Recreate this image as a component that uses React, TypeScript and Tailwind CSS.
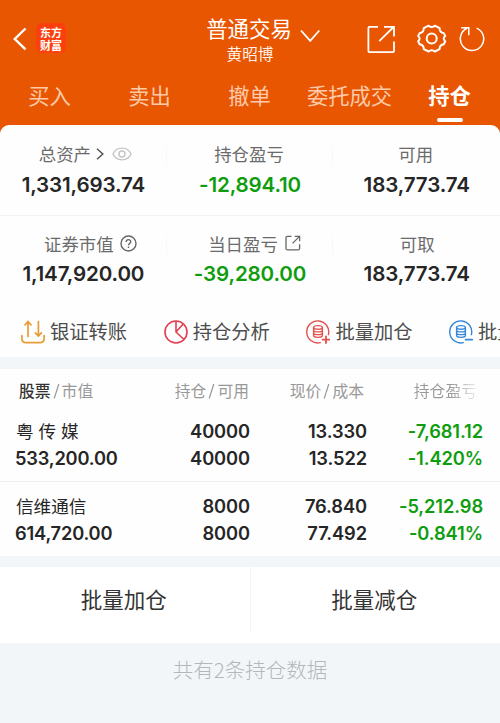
import type { ReactNode } from 'react';

const tabs = ['买入', '卖出', '撤单', '委托成交', '持仓'];

const holdings = [
    { name: '粤 传 媒', value: '533,200.00', amount: '40000', available: '40000', price: '13.330', cost: '13.522', profit: '-7,681.12', rate: '-1.420%' },
    { name: '信维通信', value: '614,720.00', amount: '8000', available: '8000', price: '76.840', cost: '77.492', profit: '-5,212.98', rate: '-0.841%' },
];

function CoinIcon({ color, minus }: { color: string; minus?: boolean }) {
    return (
        <svg className="h-6 w-6 shrink-0" viewBox="0 0 24 24" fill="none" stroke={color} strokeWidth="1.4" strokeLinecap="round">
            <path d="M14.3 22.6 A11 11 0 1 1 22.4 14.6" />
            <ellipse cx="12" cy="7.4" rx="4.4" ry="1.8" />
            <path d="M7.6 7.4 V15.6 C7.6 18 16.4 18 16.4 15.6 V7.4 M7.6 10.2 C7.6 12.4 16.4 12.4 16.4 10.2 M7.6 13 C7.6 15.2 16.4 15.2 16.4 13" />
            <path d={minus ? 'M16.6 19.7 H23.2' : 'M16.6 19.7 H23.4 M20 16.3 V23.1'} strokeWidth="1.8" />
        </svg>
    );
}

function Header() {
    return (
        <header className="h-[134px] bg-[#e85602] text-white">
            <div className="flex h-[75px] items-start">
                <div className="flex w-[150px] items-center pl-3 pt-[23px]">
                    <svg className="h-[30px] w-4" viewBox="0 0 16 30" fill="none" stroke="#fff" strokeWidth="2.4">
                        <path d="M13.5 5.5 L2.8 16 L13.5 26.3" />
                    </svg>
                    <div className="ml-2 flex h-[30px] w-[30px] items-center justify-center rounded-md bg-[#fc3f0c] pt-px text-[11px] font-bold leading-[12.5px]">
                        东方<br />财富
                    </div>
                </div>
                <div className="w-[200px] pt-[13px] text-center">
                    <div className="relative right-px text-[21.4px] leading-[30px]">
                        普通交易
                        <svg className="absolute left-[151px] top-[15px] h-4 w-5" viewBox="0 0 20 16" fill="none" stroke="#fff" strokeWidth="1.8">
                            <path d="M1 2.5 L10.2 12.8 L19.3 2.5" />
                        </svg>
                    </div>
                    <div className="text-[15.6px] leading-5 text-[#fff0e6]">黄昭博</div>
                </div>
                <div className="flex w-[150px] items-center pl-[16px] pt-[23px]">
                    <svg className="h-[30px] w-[30px]" viewBox="0 0 30 30" fill="none" stroke="#fff" strokeWidth="1.8">
                        <path d="M12 3.8 H3.5 Q2.4 3.8 2.4 4.9 V28 Q2.4 29.1 3.5 29.1 H26.9 Q28 29.1 28 28 V18.5 M13.2 18.2 L27.6 4 M18 3.8 H28 V13.5" />
                    </svg>
                    <svg className="ml-[21px] h-[30px] w-[30px]" viewBox="0 0 30 30" fill="none" stroke="#fff" strokeWidth="2" strokeLinejoin="round">
                        <path d="M11.6 2.7 Q14.7 5.2 17.8 2.7 L22.6 5.1 Q22.5 9.4 26.8 10.2 L28.2 12.9 Q25.3 15.6 28.2 18.3 L26.8 21.2 Q22.5 21.8 22.6 26.1 L17.8 28.5 Q14.7 26 11.6 28.5 L6.8 26.1 Q6.9 21.8 2.6 21.2 L1.2 18.3 Q4.1 15.6 1.2 12.9 L2.6 10.2 Q6.9 9.4 6.8 5.1 Z" />
                        <circle cx="14.7" cy="15.6" r="5" />
                    </svg>
                    <svg className="ml-3 h-[30px] w-[27px]" viewBox="0 0 27 30" fill="none" stroke="#fff" strokeWidth="1.5">
                        <path d="M17.6 5.1 A11.7 11.7 0 1 1 8 5.3 M2.2 4.8 H9.8 V12.3" />
                    </svg>
                </div>
            </div>
            <nav className="grid grid-cols-5 text-center text-[21.3px] leading-10">
                {tabs.map(tab => (
                    <div key={tab} className={tab === '持仓' ? 'relative right-[0.5px] font-bold' : 'relative right-[0.5px] text-[#fdc9a8]'}>
                        {tab}
                        {tab === '持仓' && <span className="absolute left-[37px] top-[42.5px] h-1 w-[26px] rounded-sm bg-white" />}
                    </div>
                ))}
            </nav>
        </header>
    );
}

function Stat({ label, value, green, divider }: { label: ReactNode; value: string; green?: boolean; divider?: boolean }) {
    return (
        <div className="relative flex flex-col items-center">
            <div className="relative right-px flex h-6 items-center text-[17.4px] leading-[23px] text-[#6b6b6b]">{label}</div>
            <div className={`mt-[5px] font-['Inter'] text-[20.6px] font-semibold leading-7 tracking-[-0.15px] ${green ? 'text-[#0f9d0f]' : 'text-[#262626]'}`}>{value}</div>
            {divider && <span className="absolute right-0 top-1 h-5 w-px bg-[#f8f8f8]" />}
        </div>
    );
}

function Summary() {
    return (
        <section className="-mt-[9px] rounded-t-[9px] bg-[#fefefe]">
            <div className="grid h-[91px] grid-cols-3 border-b border-[#f3f3f3] pt-[16.5px]">
                <Stat
                    divider
                    value="1,331,693.74"
                    label={
                        <div className="flex items-center pl-[6px]">
                            总资产
                            <svg className="ml-[5px] h-3 w-2" viewBox="0 0 8 12" fill="none" stroke="#555" strokeWidth="1.5">
                                <path d="M1 0.8 L6.8 6 L1 11.2" />
                            </svg>
                            <svg className="ml-2 h-[14px] w-5" viewBox="0 0 20 14" fill="none" stroke="#c4c4c4" strokeWidth="1.4">
                                <path d="M1 7 C4.5 -0.8 15.5 -0.8 19 7 C15.5 14.8 4.5 14.8 1 7 Z" />
                                <circle cx="10" cy="7" r="3" />
                            </svg>
                        </div>
                    }
                />
                <Stat divider green label="持仓盈亏" value="-12,894.10" />
                <Stat label="可用" value="183,773.74" />
            </div>
            <div className="grid h-[88px] grid-cols-3 pt-[15px]">
                <Stat
                    divider
                    value="1,147,920.00"
                    label={
                        <div className="flex items-center pl-4">
                            证券市值
                            <svg className="ml-[6px] h-[17px] w-[17px]" viewBox="0 0 17 17" fill="none" stroke="#666" strokeWidth="1.4">
                                <circle cx="8.5" cy="8.5" r="7.5" />
                                <path d="M6.2 7 C6.2 3.8 10.9 4 10.8 6.8 C10.7 8.5 8.5 8.3 8.5 10.3 M8.5 11.5 V13" />
                            </svg>
                        </div>
                    }
                />
                <Stat
                    divider
                    green
                    value="-39,280.00"
                    label={
                        <div className="flex items-center pl-[11px]">
                            当日盈亏
                            <svg className="ml-[7px] h-4 w-4" viewBox="0 0 16 16" fill="none" stroke="#666" strokeWidth="1.3">
                                <path d="M6.5 1.3 H2.5 Q1 1.3 1 2.8 V13.4 Q1 14.9 2.5 14.9 H13.1 Q14.6 14.9 14.6 13.4 V9.3 M7.6 8.4 L14.2 1.6 M9.7 1.3 H14.6 V6.2" />
                            </svg>
                        </div>
                    }
                />
                <Stat label={<span className="pl-[3px]">可取</span>} value="183,773.74" />
            </div>
        </section>
    );
}

function Action({ icon, label }: { icon: ReactNode; label: string }) {
    return (
        <div className="flex w-[142.7px] shrink-0 items-center gap-[5px] whitespace-nowrap">
            {icon}
            {label}
        </div>
    );
}

function QuickActions() {
    return (
        <section className="flex h-[53px] overflow-hidden bg-[#fefefe] pl-[21px] pt-[2px] text-[19.3px] text-[#4d4d4d]">
            <Action
                label="银证转账"
                icon={
                    <svg className="h-6 w-6 shrink-0" viewBox="0 0 24 24" fill="none" stroke="#e89c37" strokeWidth="1.7" strokeLinecap="round">
                        <path d="M0.9 15.5 V18.5 Q0.9 22.6 5 22.6 H19 Q23.1 22.6 23.1 18.5 V15.5 M7 16.5 V2 M4 4.8 L7 1.6 L10 4.8 M17.4 1.5 V16 M14.4 12.8 L17.4 16 L20.4 12.8" />
                    </svg>
                }
            />
            <Action
                label="持仓分析"
                icon={
                    <svg className="h-6 w-6 shrink-0" viewBox="0 0 24 24" fill="none" stroke="#e3404f" strokeWidth="1.6">
                        <circle cx="12" cy="12" r="11" />
                        <path d="M12 1 V12 L20 19.5 M12 12 L19.2 4" />
                    </svg>
                }
            />
            <Action label="批量加仓" icon={<CoinIcon color="#e2524d" />} />
            <Action label="批量减仓" icon={<CoinIcon color="#3586d6" minus />} />
        </section>
    );
}

function Slash() {
    return (
        <svg className="mx-[2px] h-4 w-[7px]" viewBox="0 0 7 16" stroke="#999" strokeWidth="1.2">
            <path d="M1.2 15.5 L5.8 1" />
        </svg>
    );
}

function Pair({ left, right }: { left: string; right: string }) {
    return (
        <div className="flex items-center justify-end whitespace-nowrap">
            {left}
            <Slash />
            {right}
        </div>
    );
}

function Holdings() {
    return (
        <section className="bg-[#fefefe]">
            <div className="grid h-11 grid-cols-[134px_101px_117px_116px] items-center pl-[15px] text-[15.8px] text-[#999]">
                <div className="flex items-center pl-1">
                    <span className="font-medium text-[#333]">股票</span>
                    <Slash />
                    市值
                </div>
                <div className="pr-px"><Pair left="持仓" right="可用" /></div>
                <div className="pr-[3px]"><Pair left="现价" right="成本" /></div>
                <div className="mr-[5px] bg-linear-to-r from-[#999] from-75% to-[#f2f2f2] bg-clip-text pr-px text-right text-transparent">持仓盈亏</div>
            </div>
            {holdings.map((h, i) => (
                <div
                    key={h.name}
                    className={`grid grid-cols-[134px_101px_117px_116px] pl-[15px] text-right font-['Inter','Noto_Sans_CJK_SC',sans-serif] text-[18.3px] font-semibold leading-[27px] tracking-[-0.1px] text-[#262626] ${i === 0 ? 'h-[69px] border-b border-[#f1f1f1] pt-[5px]' : 'h-[74px] pt-[11px]'}`}
                >
                    <div className="text-left">
                        <div className="pl-px text-[17.6px] font-normal tracking-normal">{h.name}</div>
                        <div className="tracking-[-0.2px]">{h.value}</div>
                    </div>
                    <div>
                        <div>{h.amount}</div>
                        <div>{h.available}</div>
                    </div>
                    <div>
                        <div>{h.price}</div>
                        <div>{h.cost}</div>
                    </div>
                    <div className="text-[#0f9d0f]">
                        <div>{h.profit}</div>
                        <div>{h.rate}</div>
                    </div>
                </div>
            ))}
        </section>
    );
}

export default function App() {
    return (
        <main className="h-[723px] w-[500px] overflow-hidden bg-[#f3f6f8] font-['Noto_Sans_CJK_SC',sans-serif]">
            <Header />
            <Summary />
            <QuickActions />
            <div className="h-3" />
            <Holdings />
            <div className="mt-[11px] flex h-[76px] bg-white pb-3 text-center text-[21.5px] leading-[63px] text-[#333]">
                <div className="flex-1 border-r border-[#f1f3f5] pr-[2px]">批量加仓</div>
                <div className="flex-1 pr-[2px]">批量减仓</div>
            </div>
            <p className="mt-3 text-center text-[20.5px] font-light leading-7 text-[#b4b6b8]">共有2条持仓数据</p>
        </main>
    );
}
